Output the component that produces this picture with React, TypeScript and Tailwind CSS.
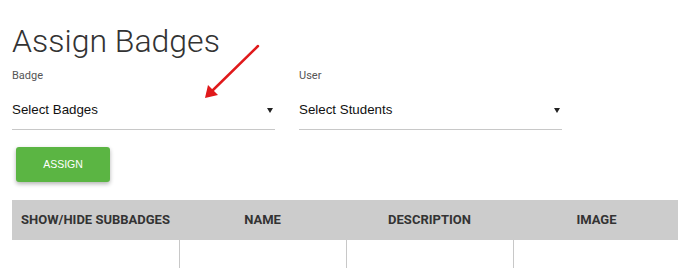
import React from 'react';

const columns = ['SHOW/HIDE SUBBADGES', 'NAME', 'DESCRIPTION', 'IMAGE'];

function SelectField({ label, placeholder }: { label: string; placeholder: string }) {
  return (
    <div className="w-[263px]">
      <div className="h-4 text-[11px] leading-4 text-[#555]">{label}</div>
      <div className="mt-[16px] flex items-center justify-between border-b border-[#c8c8c8] pb-[9px]">
        <span className="text-[13.33px] leading-5 text-[#111] font-['Liberation_Sans',Arial,sans-serif]">
          {placeholder}
        </span>
        <svg width="6" height="5" viewBox="0 0 6 5" className="mr-[2px]">
          <path d="M0 0h6L3 5z" fill="#222" />
        </svg>
      </div>
    </div>
  );
}

export default function App() {
  return (
    <div className="relative w-[678px] h-[268px] overflow-hidden bg-white font-['Roboto',sans-serif]">
      <div className="pl-3 pt-[25px]">
        <h1 className="text-[32px] leading-8 font-light text-[#333]">Assign Badges</h1>

        {/* Selects */}
        <div className="mt-[11px] flex gap-[24px]">
          <SelectField label="Badge" placeholder="Select Badges" />
          <SelectField label="User" placeholder="Select Students" />
        </div>

        {/* Assign button */}
        <button className="ml-1 mt-[17px] h-[35px] w-[94px] rounded-[3px] bg-[#5bb543] text-[10.5px] text-white font-['Liberation_Sans',Arial,sans-serif] shadow-[0_2px_4px_rgba(0,0,0,0.3)]">
          ASSIGN
        </button>

        {/* Table */}
        <div className="mt-[18px] w-[668px]">
          <div className="grid grid-cols-4 h-10 bg-[#cccccc]">
            {columns.map((c) => (
              <div key={c} className="flex items-center justify-center text-[13px] font-bold text-[#333]">
                {c}
              </div>
            ))}
          </div>
          <div className="grid grid-cols-4 h-[60px]">
            {columns.map((c, i) => (
              <div key={c} className={i === 0 ? '' : 'border-l border-[#c8c8c8]'} />
            ))}
          </div>
        </div>
      </div>

      {/* Red annotation arrow */}
      <svg className="absolute left-0 top-0 pointer-events-none" width="678" height="268">
        <line x1="258" y1="46" x2="211" y2="92" stroke="#e0191b" strokeWidth="2.5" strokeLinecap="round" />
        <path d="M205 98 L208 85 L218 95 Z" fill="#e0191b" />
      </svg>
    </div>
  );
}
